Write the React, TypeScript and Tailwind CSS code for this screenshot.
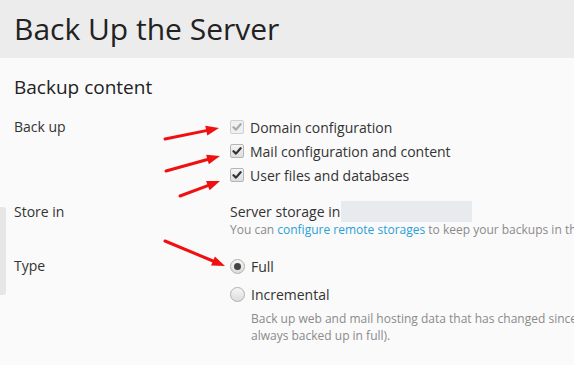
import React from "react";

const font = { fontFamily: '"Open Sans", "Noto Sans", sans-serif' };

const Check = ({ disabled }: { disabled?: boolean }) => (
  <span
    className={`flex h-[14px] w-[14px] items-center justify-center rounded-[2px] border ${
      disabled
        ? "border-[#d0d0d0] bg-[#f0f0f0]"
        : "border-[#b5b5b5] bg-gradient-to-b from-[#f4f4f4] to-[#dedede]"
    }`}
  >
    <svg width="10" height="10" viewBox="0 0 10 10">
      <path
        d="M1.5 5.2 L4 7.6 L8.6 2.2"
        fill="none"
        stroke={disabled ? "#a9a9a9" : "#333"}
        strokeWidth="2.2"
        strokeLinecap="round"
        strokeLinejoin="round"
      />
    </svg>
  </span>
);

const Radio = ({ checked }: { checked?: boolean }) => (
  <span className="flex h-[15px] w-[15px] items-center justify-center rounded-full border border-[#b0b0b0] bg-gradient-to-b from-[#f6f6f6] to-[#dcdcdc]">
    {checked && <span className="h-[7px] w-[7px] rounded-full bg-[#444]" />}
  </span>
);

const Arrow = ({ x1, y1, x2, y2 }: { x1: number; y1: number; x2: number; y2: number }) => {
  const a = Math.atan2(y2 - y1, x2 - x1);
  const len = 13;
  const w = 5;
  const bx = x2 - len * Math.cos(a);
  const by = y2 - len * Math.sin(a);
  const p1 = `${bx + w * Math.sin(a)},${by - w * Math.cos(a)}`;
  const p2 = `${bx - w * Math.sin(a)},${by + w * Math.cos(a)}`;
  return (
    <g>
      <line x1={x1} y1={y1} x2={bx} y2={by} stroke="#f01010" strokeWidth="3" strokeLinecap="round" />
      <polygon points={`${x2},${y2} ${p1} ${p2}`} fill="#f01010" />
    </g>
  );
};

export default function App() {
  return (
    <div className="relative h-[365px] w-full overflow-hidden bg-[#fafafa] text-[#333]" style={font}>
      <div className="flex h-[58px] items-center bg-[#ececec] px-[14px]">
        <h1 className="text-[30px] font-medium leading-none text-[#222]">Back Up the Server</h1>
      </div>

      <div className="px-[14px]">
        <h2 className="mt-[15px] text-[19px] font-medium leading-[28px] text-[#222]">Backup content</h2>

        <div className="mt-[14px] flex text-[14px]">
          <div className="w-[216px] shrink-0 leading-[24px]">Back up</div>
          <div className="flex flex-col">
            {[
              ["Domain configuration", true],
              ["Mail configuration and content", false],
              ["User files and databases", false],
            ].map(([t, d]) => (
              <div key={t as string} className="flex h-[24px] items-center gap-[6px]">
                <Check disabled={d as boolean} />
                <span className="whitespace-nowrap">{t}</span>
              </div>
            ))}
          </div>
        </div>

        <div className="mt-[14px] flex text-[14px]">
          <div className="w-[216px] shrink-0 leading-[21px]">Store in</div>
          <div className="flex flex-col">
            <div className="flex h-[21px] items-center whitespace-nowrap">
              <span>Server storage in</span>
              <span className="ml-[1px] h-[21px] w-[131px] bg-[#e8ebee]" />
            </div>
            <div className="whitespace-nowrap text-[12px] leading-[16px] text-[#8a8a8a]">
              You can <span className="text-[#2a9fd8]">configure remote storages</span> to keep your backups in the cloud.
            </div>
          </div>
        </div>

        <div className="mt-[14px] flex text-[14px]">
          <div className="w-[216px] shrink-0 leading-[28px]">Type</div>
          <div className="flex flex-col">
            <div className="flex h-[28px] items-center gap-[6px]">
              <Radio checked />
              <span>Full</span>
            </div>
            <div className="flex h-[28px] items-center gap-[6px]">
              <Radio />
              <span>Incremental</span>
            </div>
            <div className="mt-[2px] pl-[21px] text-[12px] leading-[17px] text-[#8a8a8a]">
              <div className="whitespace-nowrap">
                Back up web and mail hosting data that has changed since the last full backup (configuration files are
              </div>
              <div className="whitespace-nowrap">always backed up in full).</div>
            </div>
          </div>
        </div>
      </div>

      <div className="absolute left-0 top-[207px] h-[88px] w-[6px] rounded-r-[3px] bg-[#e6e6e6]" />

      <svg className="pointer-events-none absolute left-0 top-0" width="574" height="365">
        <Arrow x1={165} y1={139} x2={219} y2={128} />
        <Arrow x1={166} y1={171} x2={220} y2={156} />
        <Arrow x1={180} y1={196} x2={220} y2={181} />
        <Arrow x1={165} y1={241} x2={225} y2={266} />
      </svg>
    </div>
  );
}
